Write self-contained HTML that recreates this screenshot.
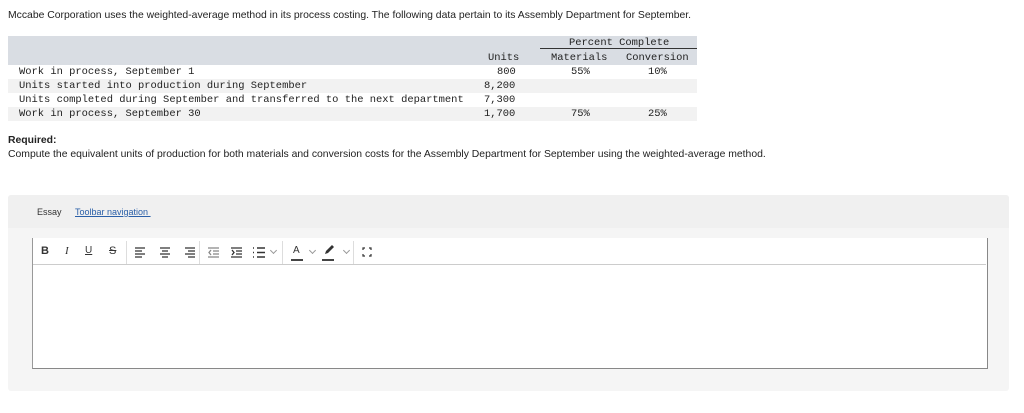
<!DOCTYPE html>
<html><head><style>
body{margin:0;background:#fff;width:1024px;height:413px;position:relative;font-family:"Liberation Sans",sans-serif;color:#222;overflow:hidden}
.a{position:absolute;white-space:nowrap}
.t{font-size:10.4px}
.m{font-family:"Liberation Mono",monospace;font-size:10.45px;color:#222}
.row{position:absolute;left:8px;width:689px;height:14px}
.ic{position:absolute;top:245px;font-size:11px;color:#333}
.sep{position:absolute;top:241px;width:1px;height:23px;background:#ddd}
.chev{position:absolute;top:248px;width:4px;height:4px;border-right:1px solid #999;border-bottom:1px solid #999;transform:rotate(45deg)}
.bar{position:absolute;height:1.5px;background:#444}
</style></head><body>
<div class="a t" style="left:8px;top:10px">Mccabe Corporation uses the weighted-average method in its process costing. The following data pertain to its Assembly Department for September.</div>

<div class="row" style="top:36px;height:29px;background:#d9dde3"></div>
<div class="row" style="top:79px;background:#f2f2f2"></div>
<div class="row" style="top:107px;background:#f2f2f2"></div>
<div class="a" style="left:540px;top:48px;width:157px;height:1px;background:#333"></div>
<div class="a m" style="left:569px;top:37px">Percent Complete</div>
<div class="a m" style="left:488px;top:52px">Units</div>
<div class="a m" style="left:551px;top:52px">Materials</div>
<div class="a m" style="left:626px;top:52px">Conversion</div>

<div class="a m" style="left:19px;top:66px">Work in process, September 1</div>
<div class="a m" style="left:19px;top:80px">Units started into production during September</div>
<div class="a m" style="left:19px;top:94px">Units completed during September and transferred to the next department</div>
<div class="a m" style="left:19px;top:108px">Work in process, September 30</div>
<div class="a m" style="left:497px;top:66px">800</div>
<div class="a m" style="left:484px;top:80px">8,200</div>
<div class="a m" style="left:484px;top:94px">7,300</div>
<div class="a m" style="left:484px;top:108px">1,700</div>
<div class="a m" style="left:571px;top:66px">55%</div>
<div class="a m" style="left:648px;top:66px">10%</div>
<div class="a m" style="left:571px;top:108px">75%</div>
<div class="a m" style="left:648px;top:108px">25%</div>

<div class="a t" style="left:8px;top:135px;font-weight:bold">Required:</div>
<div class="a t" style="left:8px;top:149px">Compute the equivalent units of production for both materials and conversion costs for the Assembly Department for September using the weighted-average method.</div>

<div class="a" style="left:8px;top:195px;width:1001px;height:196px;background:#f5f5f5;border-radius:3px"></div>
<div class="a" style="left:8px;top:195px;width:1001px;height:33px;background:#f0f0f0;border-radius:3px 3px 0 0"></div>
<div class="a" style="left:37px;top:207px;font-size:9px;color:#333">Essay</div>
<div class="a" style="left:75px;top:207px;font-size:9px;color:#2a5fa8;text-decoration:underline">Toolbar navigation&nbsp;</div>

<div class="a" style="left:32px;top:238px;width:954px;height:130px;background:#fff;border-left:1px solid #999;border-right:1.5px solid #888;border-bottom:1.5px solid #888"></div>
<div class="a" style="left:33px;top:264px;width:953px;height:1px;background:#ccc"></div>

<div class="ic" style="left:41px;font-weight:bold">B</div>
<div class="ic" style="left:65px;font-style:italic;font-family:'Liberation Serif',serif">I</div>
<div class="ic" style="left:85px;text-decoration:underline;font-size:10px">U</div>
<div class="ic" style="left:109px;text-decoration:line-through">S</div>
<div class="sep" style="left:126px"></div>
<svg class="a" style="left:134px;top:246px" width="70" height="12" stroke="#333" stroke-width="1.3">
<path d="M1 2h10M1 5h7M1 8h10M1 11h7"/><path d="M26 2h10M28 5h6M26 8h10M28 11h6"/><path d="M51 2h10M54 5h7M51 8h10M54 11h7"/></svg>
<div class="sep" style="left:199px"></div>
<svg class="a" style="left:207px;top:246px" width="60" height="12" stroke="#333" stroke-width="1.3" fill="none">
<path d="M1 2h11M6 5h6M6 8h6M1 11h11M4 4l-2 2.5 2 2.5" stroke="#888"/><path d="M24 2h11M29 5h6M29 8h6M24 11h11M25 4l2 2.5-2 2.5"/><path d="M46 2h1M50 2h8M46 6.5h1M50 6.5h8M46 11h1M50 11h8" stroke-width="1.6"/></svg>
<div class="chev" style="left:271px"></div>
<div class="sep" style="left:282px"></div>
<div class="ic" style="left:293px;font-size:10px">A</div>
<div class="bar" style="left:291px;top:259px;width:12px"></div>
<div class="chev" style="left:310px"></div>
<svg class="a" style="left:322px;top:244px" width="14" height="14"><path d="M3 10l1-3 6-6 2 2-6 6z" fill="#333"/></svg>
<div class="bar" style="left:322px;top:259px;width:12px"></div>
<div class="chev" style="left:344px"></div>
<div class="sep" style="left:353px"></div>
<svg class="a" style="left:362px;top:247px" width="10" height="10" stroke="#333" stroke-width="1.2" fill="none"><path d="M1 3V1h2M7 1h2v2M9 7v2H7M3 9H1V7"/></svg>
</body></html>
